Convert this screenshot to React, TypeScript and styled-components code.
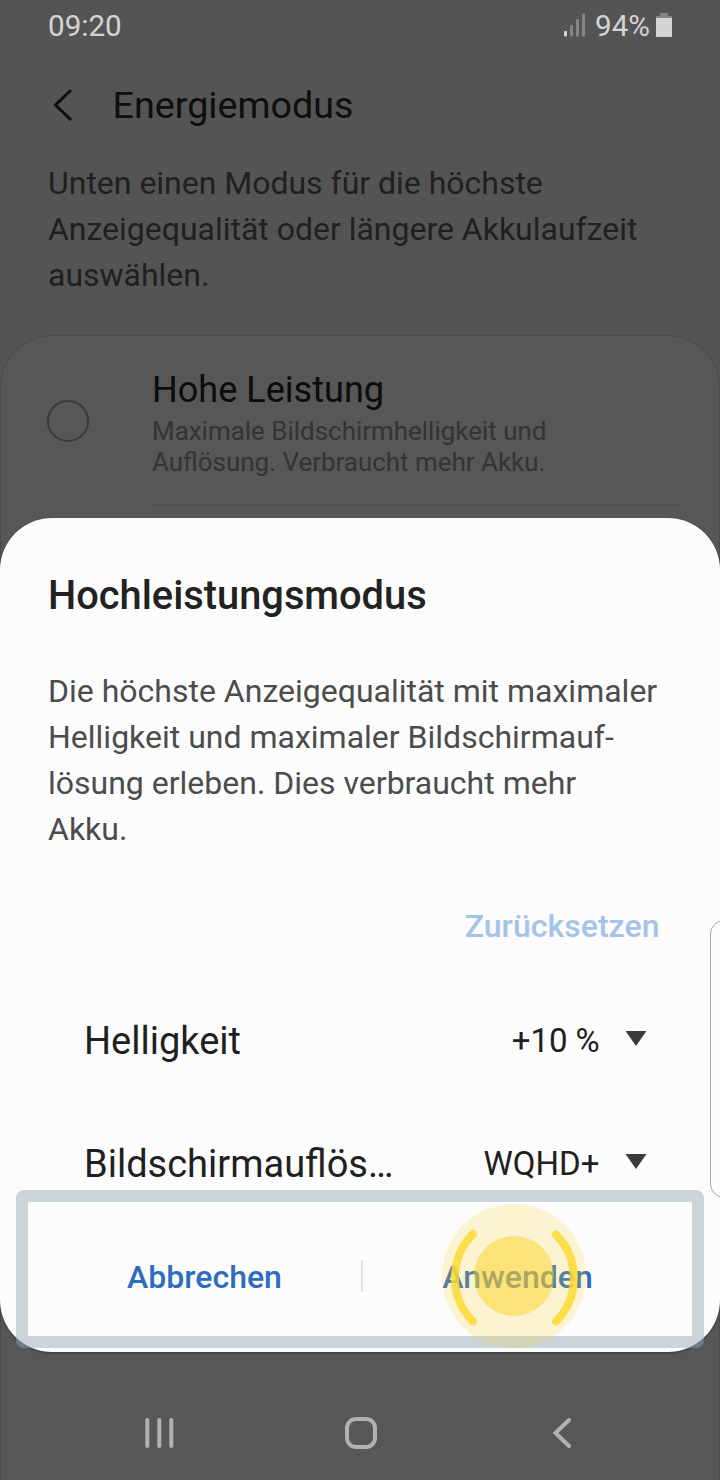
import React from "react";
import styled, { createGlobalStyle } from "styled-components";

const Global = createGlobalStyle`
  * { box-sizing: border-box; }
  body { margin: 0; background: #545454; }
`;

const Screen = styled.div`
  position: relative;
  display: flex;
  flex-direction: column;
  width: 720px;
  height: 1480px;
  overflow: hidden;
  background: #545454;
  font-family: Roboto, "Liberation Sans", sans-serif;
`;

const Text = styled.span<{ $size: number; $color: string; $weight?: number; $spacing?: number }>`
  display: block;
  font-size: ${(p) => p.$size}px;
  color: ${(p) => p.$color};
  font-weight: ${(p) => p.$weight ?? 400};
  letter-spacing: ${(p) => p.$spacing ?? 0}px;
  white-space: nowrap;
`;

const StatusBar = styled.div`
  display: flex;
  align-items: center;
  justify-content: space-between;
  height: 50px;
  padding: 1px 48px 0;
`;

const StatusIcons = styled.div`
  display: flex;
  align-items: center;
  gap: 6px;
`;

const SignalIcon = styled.svg`
  margin: 0 3px 1px 0;
`;

const BatteryIcon = styled.svg`
  margin-bottom: 2px;
`;

const Header = styled.header`
  display: flex;
  align-items: center;
  height: 110px;
  padding-left: 48px;
  gap: 32.5px;
`;

const BackIcon = styled.svg`
  margin-bottom: 1px;
`;

const Intro = styled.p`
  margin: 0;
  height: 175px;
  padding-left: 48px;
  line-height: 46px;
`;

const Card = styled.section`
  flex: 1;
  display: flex;
  align-items: flex-start;
  border: 1px solid #4c4c4c;
  border-bottom: none;
  border-radius: 52px 52px 0 0;
  background: #575757;
`;

const Radio = styled.span`
  flex: none;
  width: 42px;
  height: 42px;
  margin: 64px 62px 0 46px;
  border: 2px solid #3a3a3a;
  border-radius: 50%;
`;

const Option = styled.div`
  display: flex;
  flex-direction: column;
  width: 528px;
  height: 170px;
  margin-left: 1px;
  padding-top: 31px;
  border-bottom: 2px solid #505050;
  line-height: 31px;
`;

const OptionTitle = styled.div`
  height: 49px;
  line-height: 46px;
`;

const Dialog = styled.section`
  position: absolute;
  left: 0;
  top: 518px;
  width: 720px;
  height: 834px;
  display: flex;
  flex-direction: column;
  border-radius: 52px;
  background: #fcfcfc;
  box-shadow: 0 1px 3px rgba(0, 0, 0, 0.35);
`;

const DialogTitle = styled.h1`
  margin: 0;
  padding: 53px 48px 0;
  height: 150px;
  line-height: 50px;
`;

const DialogBody = styled.p`
  margin: 0;
  padding-left: 48px;
  height: 210px;
  line-height: 46px;
`;

const ResetRow = styled.div`
  display: flex;
  justify-content: flex-end;
  align-items: center;
  height: 96px;
  padding-right: 60.5px;
`;

const Setting = styled.div`
  display: flex;
  align-items: center;
  height: 123px;
  padding: 10px 73px 0 84px;
`;

const Value = styled.div`
  display: flex;
  align-items: center;
  margin-left: auto;
  gap: 25.5px;
`;

const Actions = styled.div`
  display: flex;
  align-items: center;
  height: 96px;
  margin-top: 8px;
`;

const Action = styled.button`
  display: flex;
  justify-content: center;
  width: 313px;
  margin-left: 48px;
  padding: 2px 0 0;
  border: 0;
  background: none;
  font-family: inherit;
  & + span + & { margin-left: -2px; }
`;

const Divider = styled.span`
  width: 2px;
  height: 32px;
  background: #e3e3e3;
`;

const EdgeHandle = styled.div`
  position: absolute;
  left: 710px;
  top: 920px;
  width: 30px;
  height: 278px;
  border: 1.5px solid #a8a8a8;
  border-radius: 14px;
  background: #fcfcfc;
`;

const Frame = styled.div`
  position: absolute;
  left: 16px;
  top: 1190px;
  width: 688px;
  height: 158px;
  border: 12px solid rgba(151, 170, 180, 0.485);
  border-radius: 8px;
`;

const TapMarker = styled.svg`
  position: absolute;
  left: 442px;
  top: 1204px;
  pointer-events: none;
`;

const NavBar = styled.nav`
  position: absolute;
  left: 0;
  bottom: 0;
  display: flex;
  align-items: center;
  justify-content: space-between;
  width: 720px;
  height: 94px;
  padding: 0 144px;
`;

const HomeIcon = styled.svg`
  margin-right: 6px;
`;

const CaretIcon = styled.svg`
  margin-bottom: 4px;
`;

const Caret = () => (
  <CaretIcon width="22" height="15" viewBox="0 0 22 15">
    <path d="M0.5 0H21.5L11 15Z" fill="#3a3a3a" />
  </CaretIcon>
);

const settings = [
  { label: "Helligkeit", value: "+10 %", spacing: -0.1 },
  { label: "Bildschirmauflös…", value: "WQHD+", spacing: 0 },
];

export default function App() {
  return (
    <Screen>
      <Global />
      <StatusBar>
        <Text $size={29.6} $color="#d4d4d4">09:20</Text>
        <StatusIcons>
          <SignalIcon width="22" height="24" viewBox="0 0 22 24">
            <rect x="0" y="18" width="3" height="5.5" rx="1" fill="#d4d4d4" />
            <rect x="6" y="12" width="3" height="11.5" rx="1" fill="#858585" />
            <rect x="12" y="6" width="3" height="17.5" rx="1" fill="#858585" />
            <rect x="18" y="0.5" width="3" height="23" rx="1" fill="#858585" />
          </SignalIcon>
          <Text $size={29.6} $color="#d4d4d4">94%</Text>
          <BatteryIcon width="16" height="24" viewBox="0 0 16 24">
            <path d="M4 0H12V3H15Q16 3 16 4V6H0V4Q0 3 1 3H4Z" fill="#858585" />
            <path d="M0 5H16V23Q16 24 15 24H1Q0 24 0 23Z" fill="#d4d4d4" />
          </BatteryIcon>
        </StatusIcons>
      </StatusBar>
      <Header>
        <BackIcon width="32" height="34" viewBox="0 0 32 34" fill="none" stroke="#0e0e0e" strokeWidth="3">
          <path d="M23 2L7.5 17L23 32" />
        </BackIcon>
        <Text $size={37.7} $color="#0e0e0e">Energiemodus</Text>
      </Header>
      <Intro>
        <Text $size={31.97} $color="#202020">
          Unten einen Modus für die höchste<br />
          Anzeigequalität oder längere Akkulaufzeit<br />
          auswählen.
        </Text>
      </Intro>
      <Card>
        <Radio />
        <Option>
          <OptionTitle><Text $size={36.1} $color="#0c0c0c">Hohe Leistung</Text></OptionTitle>
          <Text $size={25.95} $color="#343434">
            Maximale Bildschirmhelligkeit und<br />
            Auflösung. Verbraucht mehr Akku.
          </Text>
        </Option>
      </Card>

      <Dialog>
        <DialogTitle><Text $size={39.8} $weight={500} $color="#222222">Hochleistungsmodus</Text></DialogTitle>
        <DialogBody>
          <Text $size={32} $color="#4c4c4c">
            Die höchste Anzeigequalität mit maximaler<br />
            Helligkeit und maximaler Bildschirmauf-<br />
            lösung erleben. Dies verbraucht mehr<br />
            Akku.
          </Text>
        </DialogBody>
        <ResetRow><Text $size={32.1} $weight={500} $color="#a3c4e8">Zurücksetzen</Text></ResetRow>
        {settings.map((s) => (
          <Setting key={s.label}>
            <Text $size={38} $color="#202020">{s.label}</Text>
            <Value>
              <Text $size={33} $color="#202020" $spacing={s.spacing}>{s.value}</Text>
              <Caret />
            </Value>
          </Setting>
        ))}
        <Actions>
          <Action><Text $size={32} $weight={500} $color="#2f6cc0">Abbrechen</Text></Action>
          <Divider />
          <Action><Text $size={32} $weight={500} $color="#2f6cc0">Anwenden</Text></Action>
        </Actions>
      </Dialog>

      <EdgeHandle />
      <Frame />
      <TapMarker width="144" height="144" viewBox="0 0 144 144" fill="none">
        <circle cx="72" cy="72" r="72" fill="rgb(255,208,40)" fillOpacity="0.2" />
        <circle cx="72" cy="72" r="40" fill="rgb(250,210,30)" fillOpacity="0.49" />
        <g stroke="rgb(252,216,50)" strokeOpacity="0.85" strokeWidth="8" strokeLinecap="round">
          <path d="M31 30A62 62 0 0 0 31 117.5" />
          <path d="M114 30.5A62 62 0 0 1 114 117.5" />
        </g>
      </TapMarker>

      <NavBar>
        <svg width="31" height="32" viewBox="0 0 31 32" stroke="#b2b2b2" strokeWidth="4" strokeLinecap="round">
          <path d="M3.3 3V29M15.3 3V29M27.3 3V29" />
        </svg>
        <HomeIcon width="34" height="34" viewBox="0 0 34 34" fill="none" stroke="#b2b2b2" strokeWidth="4">
          <rect x="3" y="3" width="28" height="28" rx="9" />
        </HomeIcon>
        <svg width="24" height="32" viewBox="0 0 24 32" fill="none" stroke="#b2b2b2" strokeWidth="4" strokeLinecap="round">
          <path d="M17 3L3.5 16L17 29" />
        </svg>
      </NavBar>
    </Screen>
  );
}
